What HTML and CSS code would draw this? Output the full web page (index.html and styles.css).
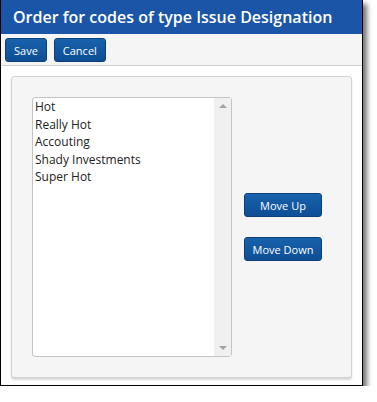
FILE: index.html
```html
<!DOCTYPE html>
<html lang="en">
<head>
    <meta charset="UTF-8">
    <meta name="viewport" content="width=device-width, initial-scale=1.0">
    <title>Order for codes</title>
    <link rel="stylesheet" href="styles.css">
</head>
<body>
    <div class="window">
        <div class="title-bar">Order for codes of type Issue Designation</div>
        <div class="toolbar">
            <button class="btn">Save</button>
            <button class="btn">Cancel</button>
        </div>
        <div class="content">
            <div class="panel">
                <div class="listbox">
                    <ul class="items">
                        <li>Hot</li>
                        <li>Really Hot</li>
                        <li>Accouting</li>
                        <li>Shady Investments</li>
                        <li>Super Hot</li>
                    </ul>
                    <div class="scrollbar">
                        <span class="arrow up"></span>
                        <span class="arrow down"></span>
                    </div>
                </div>
                <div class="move-buttons">
                    <button class="btn move">Move Up</button>
                    <button class="btn move">Move Down</button>
                </div>
            </div>
        </div>
    </div>
</body>
</html>
```
FILE: styles.css
```css
body {
    font-family: 'Open Sans', 'Liberation Sans', sans-serif;
    background-color: #fff;
    margin: 0;
    padding: 0;
}
.window {
    width: 361px;
    border: 1px solid #000;
    border-top: none;
    box-shadow: 4px 4px 5px rgba(0, 0, 0, 0.55);
    background-color: #fff;
}
.title-bar {
    height: 34px;
    line-height: 34px;
    background-color: #1b55a7;
    color: #fff;
    font-size: 16px;
    font-weight: 600;
    padding-left: 12px;
    white-space: nowrap;
    overflow: hidden;
}
.toolbar {
    height: 32px;
    background-color: #f5f5f5;
    border-bottom: 1px solid #cfcfcf;
    display: flex;
    gap: 7px;
    padding: 4px 0 0 4px;
    box-sizing: border-box;
}
.btn {
    font-family: inherit;
    font-size: 11px;
    color: #fff;
    background: linear-gradient(#1762ac, #0e4e94);
    border: 1px solid #0b3f7c;
    border-radius: 3px;
    height: 24px;
    padding: 0 8px;
    white-space: nowrap;
    cursor: pointer;
}
.content {
    padding: 10px 10px 7px;
}
.panel {
    height: 302px;
    box-sizing: border-box;
    background-color: #f5f5f5;
    border: 1px solid #d2d2d2;
    border-radius: 3px;
    box-shadow: 0 2px 2px rgba(0, 0, 0, 0.15);
    padding: 20px;
    display: flex;
    align-items: center;
    gap: 12px;
}
.listbox {
    width: 200px;
    height: 260px;
    box-sizing: border-box;
    background-color: #fff;
    border: 1px solid #c4c4c4;
    border-radius: 3px;
    display: flex;
}
.items {
    list-style: none;
    margin: 0;
    padding: 0 0 0 2px;
    flex: 1;
    font-size: 12px;
    line-height: 17.5px;
    color: #222;
}
.scrollbar {
    width: 17px;
    background-color: #f0f0f0;
    display: flex;
    flex-direction: column;
    justify-content: space-between;
    align-items: center;
    padding: 6px 0;
}
.arrow {
    width: 0;
    height: 0;
    border-left: 4px solid transparent;
    border-right: 4px solid transparent;
}
.arrow.up { border-bottom: 4px solid #a3a3a3; }
.arrow.down { border-top: 4px solid #a3a3a3; }
.move-buttons {
    display: flex;
    flex-direction: column;
    gap: 20px;
}
.move {
    width: 78px;
    padding: 0;
}
```
